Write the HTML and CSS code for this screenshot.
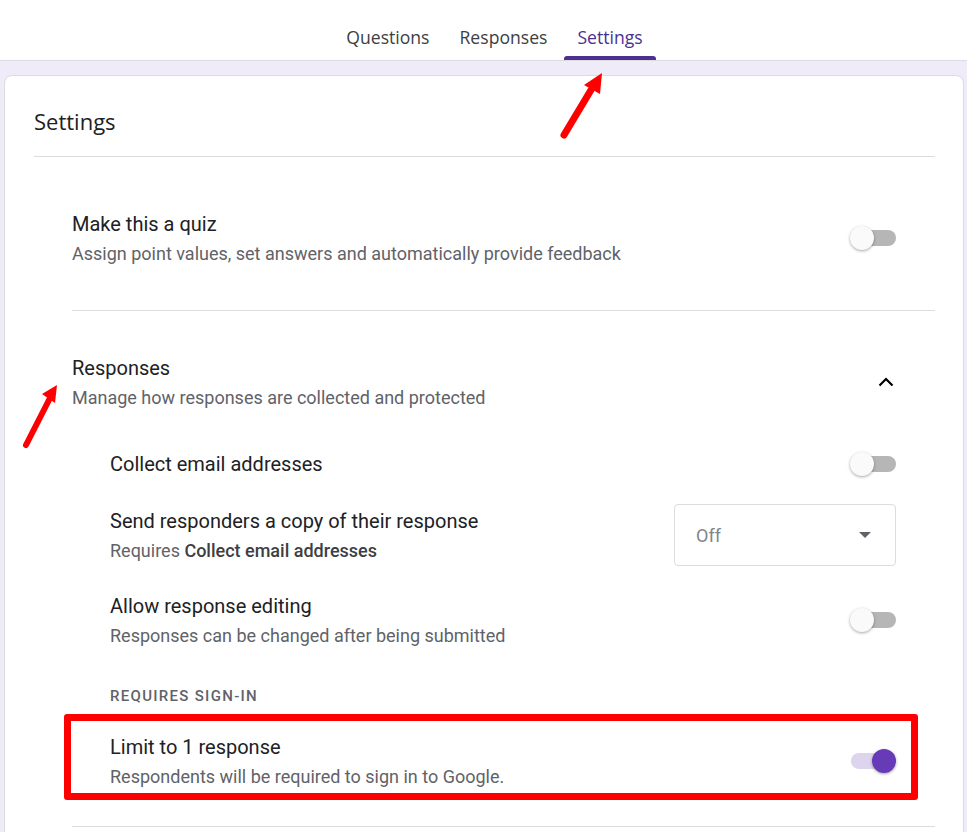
FILE: index.html
```html
<!DOCTYPE html>
<html lang="en">
<head>
    <meta charset="UTF-8">
    <meta name="viewport" content="width=device-width, initial-scale=1.0">
    <title>Form Settings</title>
    <link rel="stylesheet" href="styles.css">
</head>
<body>
    <header class="topbar">
        <nav class="tabs">
            <a class="tab">Questions</a>
            <a class="tab">Responses</a>
            <a class="tab active">Settings</a>
        </nav>
    </header>

    <main class="page">
        <div class="card">
            <h1 class="card-title">Settings</h1>

            <section class="setting-group">
                <div class="setting-row">
                    <div class="setting-text">
                        <div class="setting-name">Make this a quiz</div>
                        <div class="setting-desc">Assign point values, set answers and automatically provide feedback</div>
                    </div>
                    <span class="toggle"></span>
                </div>
            </section>

            <section class="setting-group last">
                <div class="setting-row">
                    <div class="setting-text">
                        <div class="setting-name">Responses</div>
                        <div class="setting-desc">Manage how responses are collected and protected</div>
                    </div>
                    <svg class="chevron" width="16" height="10" viewBox="0 0 16 10">
                        <polyline points="1.5,8.5 8,2 14.5,8.5" fill="none" stroke="#000" stroke-width="2.2"/>
                    </svg>
                </div>

                <div class="sub-settings">
                    <div class="setting-row">
                        <div class="setting-name">Collect email addresses</div>
                        <span class="toggle"></span>
                    </div>
                    <div class="setting-row">
                        <div class="setting-text">
                            <div class="setting-name">Send responders a copy of their response</div>
                            <div class="setting-desc">Requires <b>Collect email addresses</b></div>
                        </div>
                        <div class="select">Off</div>
                    </div>
                    <div class="setting-row">
                        <div class="setting-text">
                            <div class="setting-name">Allow response editing</div>
                            <div class="setting-desc">Responses can be changed after being submitted</div>
                        </div>
                        <span class="toggle"></span>
                    </div>
                    <div class="section-label">Requires sign-in</div>
                    <div class="setting-row limit-row">
                        <div class="setting-text">
                            <div class="setting-name">Limit to 1 response</div>
                            <div class="setting-desc">Respondents will be required to sign in to Google.</div>
                        </div>
                        <span class="toggle on"></span>
                        <div class="highlight"></div>
                    </div>
                </div>
            </section>
        </div>
    </main>

    <!-- red annotation arrows -->
    <svg class="annotations" width="967" height="832" viewBox="0 0 967 832">
        <line x1="564" y1="135" x2="591" y2="90" stroke="#ff0000" stroke-width="7" stroke-linecap="round"/>
        <polygon points="602,73 584,85 600,94" fill="#ff0000"/>
        <line x1="26" y1="445" x2="50" y2="398" stroke="#ff0000" stroke-width="6" stroke-linecap="round"/>
        <polygon points="57,385 42,394 55,403" fill="#ff0000"/>
    </svg>
</body>
</html>
```

FILE: styles.css
```css
body {
    margin: 0;
    font-family: Roboto, "Liberation Sans", Arial, sans-serif;
    background-color: #f0ebf8;
    color: #202124;
    position: relative;
}
.topbar {
    height: 60px;
    background-color: #fff;
    border-bottom: 1px solid #dadce0;
}
.tabs {
    display: flex;
    justify-content: center;
    gap: 4px;
    padding-left: 22px;
    height: 100%;
}
.tab {
    position: relative;
    box-sizing: border-box;
    height: 60px;
    padding: 25px 13px 0;
    font-family: "Open Sans", sans-serif;
    font-weight: 500;
    font-size: 17.6px;
    line-height: 24px;
    color: #3c4043;
}
.tab.active {
    color: #4d2f8f;
}
.tab.active::after {
    content: "";
    position: absolute;
    left: 0;
    right: 0;
    bottom: 0;
    height: 4px;
    background-color: #4d2f8f;
    border-radius: 3px 3px 0 0;
}
.card {
    margin: 14px 3px 0 4px;
    padding: 0 28px 40px 29px;
    background-color: #fff;
    border: 1px solid #dadce0;
    border-radius: 8px;
}
.card-title {
    margin: 0;
    padding: 31px 0 21px;
    font-family: "Open Sans", sans-serif;
    font-weight: 400;
    font-size: 22px;
    line-height: 28px;
    border-bottom: 1px solid #dadce0;
}
.setting-group {
    margin-left: 38px;
    padding: 45px 39px 46px 0;
    border-bottom: 1px solid #dadce0;
}
.setting-group:first-of-type {
    margin-top: 10px;
}
.setting-group.last {
    padding-bottom: 39px;
}
.setting-row {
    display: flex;
    align-items: center;
    justify-content: space-between;
}
.setting-name {
    font-size: 20px;
    line-height: 24px;
}
.setting-desc {
    margin-top: 7px;
    font-size: 18px;
    line-height: 21px;
    color: #5f6368;
}
.setting-desc b {
    font-weight: 500;
    color: #3c4043;
}
.chevron {
    margin-right: 2px;
}
.sub-settings {
    display: flex;
    flex-direction: column;
    gap: 28px;
    margin: 44px 0 0 38px;
}
.section-label {
    margin-top: 12px;
    font-size: 15px;
    font-weight: 500;
    line-height: 20px;
    letter-spacing: 1.3px;
    text-transform: uppercase;
    color: #5f6368;
}
.limit-row {
    position: relative;
    margin-top: 1px;
}
.highlight {
    position: absolute;
    left: -46px;
    top: -21px;
    right: -22px;
    bottom: -13px;
    border: 7px solid #ff0000;
    border-radius: 3px;
}
.toggle {
    position: relative;
    flex: none;
    width: 46px;
    height: 24px;
}
.toggle::before {
    content: "";
    position: absolute;
    left: 4px;
    top: 4px;
    width: 42px;
    height: 16px;
    border-radius: 8px;
    background-color: #b6b6b6;
}
.toggle::after {
    content: "";
    position: absolute;
    left: 0;
    top: 0;
    width: 24px;
    height: 24px;
    border-radius: 50%;
    background-color: #fafafa;
    box-shadow: 0 1px 3px rgba(0, 0, 0, 0.35);
}
.toggle.on::before {
    left: 1px;
    width: 40px;
    background-color: #ddd5ee;
}
.toggle.on::after {
    left: 22px;
    background-color: #673ab7;
}
.select {
    box-sizing: border-box;
    width: 222px;
    height: 62px;
    display: flex;
    align-items: center;
    justify-content: space-between;
    padding: 0 24px 0 21px;
    border: 1px solid #dadce0;
    border-radius: 4px;
    font-size: 18px;
    color: #80868b;
}
.select::after {
    content: "";
    border-left: 6px solid transparent;
    border-right: 6px solid transparent;
    border-top: 6px solid #5f6368;
}
.annotations {
    position: absolute;
    left: 0;
    top: 0;
    pointer-events: none;
}
```
